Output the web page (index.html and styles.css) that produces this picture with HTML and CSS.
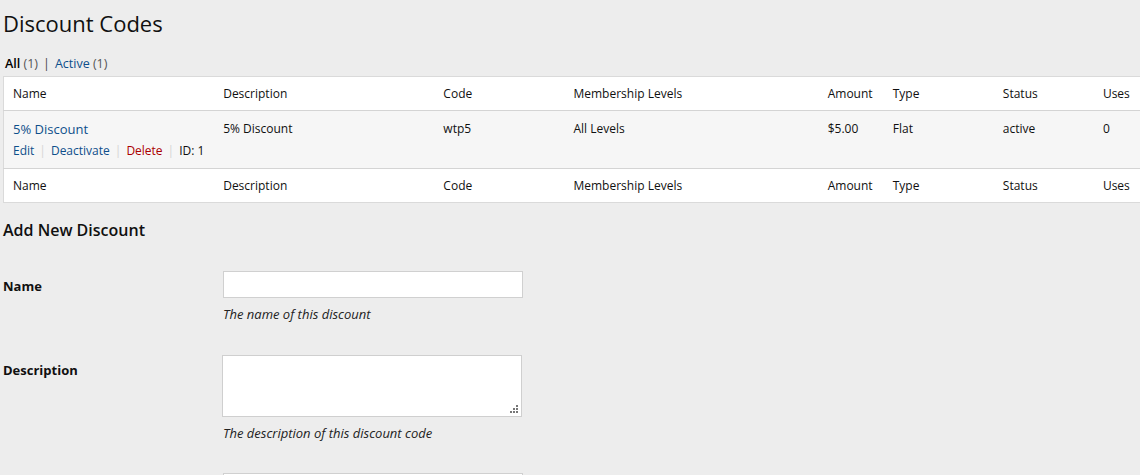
FILE: index.html
```html
<!DOCTYPE html>
<html>
<head>
<meta charset="utf-8">
<link rel="stylesheet" href="styles.css">
</head>
<body>
<div class="wrap">
  <h1 class="title">Discount Codes</h1>
  <ul class="subsubsub">
    <li><a class="current">All <span class="count">(1)</span></a> <span class="sep">|</span></li>
    <li><a class="link">Active <span class="count">(1)</span></a></li>
  </ul>
  <table class="list">
    <thead>
      <tr>
        <th class="c-name">Name</th>
        <th class="c-desc">Description</th>
        <th class="c-code">Code</th>
        <th class="c-levels">Membership Levels</th>
        <th class="c-amount">Amount</th>
        <th class="c-type">Type</th>
        <th class="c-status">Status</th>
        <th class="c-uses">Uses</th>
      </tr>
    </thead>
    <tbody>
      <tr class="alt">
        <td>
          <a class="row-title">5% Discount</a>
          <div class="row-actions">
            <a class="link">Edit</a><span class="bar">|</span><a class="link">Deactivate</a><span class="bar">|</span><a class="del">Delete</a><span class="bar">|</span><span>ID: 1</span>
          </div>
        </td>
        <td>5% Discount</td>
        <td>wtp5</td>
        <td>All Levels</td>
        <td>$5.00</td>
        <td>Flat</td>
        <td>active</td>
        <td>0</td>
      </tr>
    </tbody>
    <tfoot>
      <tr>
        <th>Name</th>
        <th>Description</th>
        <th>Code</th>
        <th>Membership Levels</th>
        <th>Amount</th>
        <th>Type</th>
        <th>Status</th>
        <th>Uses</th>
      </tr>
    </tfoot>
  </table>

  <h3 class="section">Add New Discount</h3>
  <div class="form">
    <div class="field">
      <label class="lbl">Name</label>
      <div class="ctl">
        <input class="input" type="text">
        <p class="help">The name of this discount</p>
      </div>
    </div>
    <div class="field">
      <label class="lbl lbl-desc">Description</label>
      <div class="ctl">
        <div class="ta-wrap">
          <textarea class="textarea"></textarea>
          <span class="grip"></span>
        </div>
        <p class="help help-desc">The description of this discount code</p>
      </div>
    </div>
    <div class="field">
      <label class="lbl"></label>
      <div class="ctl">
        <input class="input" type="text">
      </div>
    </div>
  </div>
</div>
</body>
</html>
```
FILE: styles.css
```css
html, body {
  margin: 0;
  padding: 0;
  background: #ededed;
  overflow: hidden;
}
body {
  font-family: "Open Sans", "Noto Sans", sans-serif;
  font-size: 12px;
  color: #23282d;
}
.wrap {
  padding: 0 0 0 3px;
  width: 1160px;
}
.title {
  font-size: 22px;
  font-weight: 400;
  margin: 0;
  padding: 9px 0 0 0;
  line-height: 29px;
  color: #101010;
}
.subsubsub {
  list-style: none;
  margin: 17px 0 0 2px;
  padding: 0;
  display: flex;
  gap: 5px;
  font-size: 12.5px;
  line-height: 18px;
  color: #555;
}
.subsubsub li { display: flex; gap: 5px; }
.subsubsub .current { color: #000; font-weight: 600; }
.subsubsub .current .count { font-weight: 400; color: #555; }
.subsubsub .sep { color: #444; }
.subsubsub .count { color: #555; }
.link { color: #0e4f8b; text-decoration: none; }
.link .count { color: #555; }

.list {
  margin-top: 3px;
  width: 1150px;
  border-collapse: collapse;
  border: 1px solid #dadada;
  background: #fff;
  table-layout: fixed;
}
.list th, .list td {
  text-align: left;
  font-weight: 400;
  font-size: 12px;
  padding: 0 9px;
  vertical-align: top;
  color: #101010;
  white-space: nowrap;
}
.list thead th, .list tfoot th {
  height: 33px;
  vertical-align: middle;
}
.list thead tr { border-bottom: 1px solid #d4d4d4; }
.list tfoot tr { border-top: 1px solid #d4d4d4; }
.list tbody td { padding-top: 9px; height: 48px; line-height: 18px; }
.list tbody tr.alt { background: #f6f6f6; }
.c-name { width: 192px; }
.c-desc { width: 202px; }
.c-code { width: 112px; }
.c-levels { width: 236px; }
.c-amount { width: 47px; }
.c-type { width: 92px; }
.c-status { width: 82px; }
.c-uses { width: 40px; }

.row-title { color: #0e4f8b; font-size: 13px; font-weight: 500; text-decoration: none; }
.row-actions { margin-top: 3px; display: flex; align-items: center; font-size: 12px; }
.row-actions .bar { color: #d5d5d5; margin: 0 5px; }
.del { color: #a00; }

.section {
  font-size: 16px;
  font-weight: 600;
  margin: 16px 0 0 0;
  line-height: 22px;
  color: #101010;
}
.form { margin-top: 30px; }
.field { display: flex; }
.lbl {
  width: 220px;
  flex: none;
  font-weight: 700;
  font-size: 13px;
  color: #101010;
  padding-top: 6px;
  line-height: 18px;
}
.ctl { display: flex; flex-direction: column; }
.input {
  width: 300px;
  height: 27px;
  box-sizing: border-box;
  border: 1px solid #d0d0d0;
  background: #fff;
  margin: 0;
  padding: 0;
}
.ta-wrap {
  position: relative;
  width: 300px;
  height: 62px;
  margin: 13px 0 0 -1px;
}
.textarea {
  display: block;
  width: 300px;
  height: 62px;
  box-sizing: border-box;
  border: 1px solid #cfcfcf;
  background: #fff;
  margin: 0;
  padding: 0;
  resize: none;
}
.grip {
  position: absolute;
  right: 3px;
  bottom: 3px;
  width: 9px;
  height: 9px;
  background:
    linear-gradient(#777,#777) 6px 0/2px 2px no-repeat,
    linear-gradient(#777,#777) 3px 3px/2px 2px no-repeat,
    linear-gradient(#777,#777) 6px 3px/2px 2px no-repeat,
    linear-gradient(#777,#777) 0 6px/2px 2px no-repeat,
    linear-gradient(#777,#777) 3px 6px/2px 2px no-repeat,
    linear-gradient(#777,#777) 6px 6px/2px 2px no-repeat;
}
.lbl-desc { padding-top: 19px; }
.help {
  margin: 6px 0 0 0;
  font-style: italic;
  font-size: 13px;
  line-height: 20px;
  color: #222;
  height: 38px;
}
.help-desc { margin-top: 6px; height: 50px; }
```
